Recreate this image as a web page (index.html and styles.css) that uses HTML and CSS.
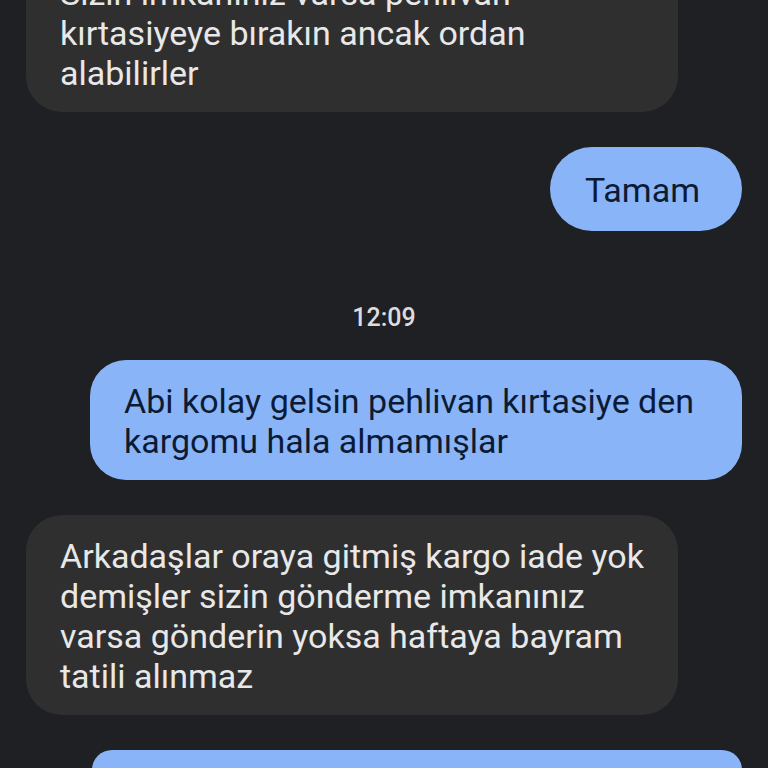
FILE: index.html
```html
<!DOCTYPE html>
<html lang="tr">
<head>
<meta charset="utf-8">
<link rel="stylesheet" href="styles.css">
</head>
<body>
<main class="chat">
  <div class="row in first">
    <div class="bubble gray">Sizin imkanınız varsa pehlivan kırtasiyeye bırakın ancak ordan alabilirler</div>
  </div>
  <div class="row out">
    <div class="bubble blue short">Tamam</div>
  </div>
  <div class="stamp">12:09</div>
  <div class="row out">
    <div class="bubble blue">Abi kolay gelsin pehlivan kırtasiye den kargomu hala almamışlar</div>
  </div>
  <div class="row in">
    <div class="bubble gray">Arkadaşlar oraya gitmiş kargo iade yok demişler sizin gönderme imkanınız varsa gönderin yoksa haftaya bayram tatili alınmaz</div>
  </div>
  <div class="row out">
    <div class="bubble blue tail"></div>
  </div>
</main>
</body>
</html>
```
FILE: styles.css
```css
html, body {
  margin: 0;
  padding: 0;
  background: #1f2023;
  height: 768px;
  overflow: hidden;
}
.chat {
  display: flex;
  flex-direction: column;
  gap: 35px;
  padding: 0 26px;
  font-family: Roboto, "Noto Sans", sans-serif;
  font-size: 34px;
  line-height: 40px;
  margin-top: -27px;
}
.row {
  display: flex;
}
.row.in { justify-content: flex-start; }
.row.out { justify-content: flex-end; }
.bubble {
  box-sizing: border-box;
  max-width: 652px;
  padding: 21px 28px 19px 34px;
  border-radius: 36px;
}
.gray {
  background: #2f2f30;
  color: #e8e8e8;
}
.blue {
  background: #8ab4f8;
  color: #0c1b34;
}
.short {
  padding: 23px 42px 21px 35px;
  border-radius: 42px;
}
.tail {
  width: 650px;
  height: 40px;
}
.first .bubble {
  padding-top: 0;
  border-top-left-radius: 0;
  border-top-right-radius: 0;
}
.stamp {
  text-align: center;
  color: #dcdcdc;
  font-size: 25px;
  line-height: 26px;
  font-weight: 500;
  margin: 39px 0 -6px;
}
```
